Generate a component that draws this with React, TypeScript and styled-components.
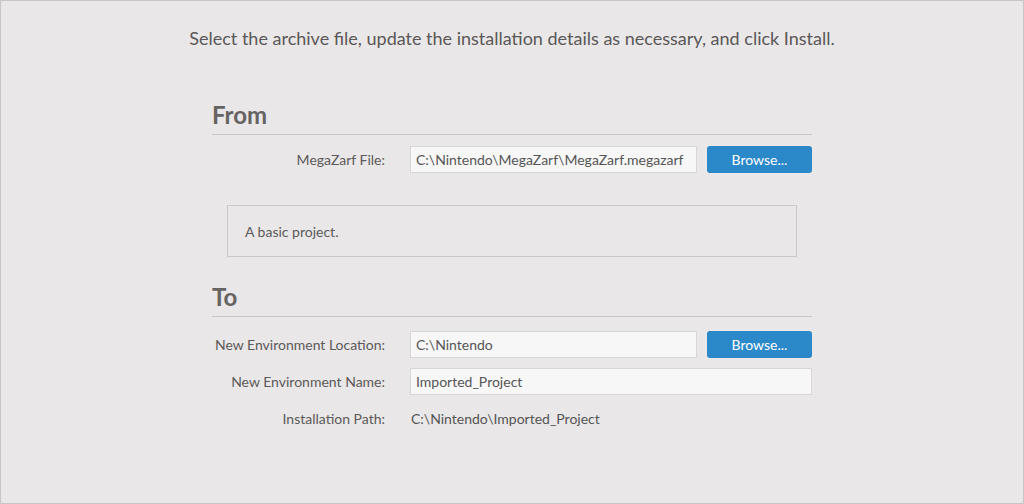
import React from "react";
import styled, { createGlobalStyle } from "styled-components";

const GlobalStyle = createGlobalStyle`
  html, body {
    margin: 0;
    padding: 0;
    background: #e9e7e7;
  }
  body {
    font-family: Lato, "Open Sans", sans-serif;
    color: #555;
  }
`;

const Window = styled.div`
  box-sizing: border-box;
  width: 1024px;
  height: 504px;
  border: 1px solid #c8c6c6;
  background: #e9e7e7;
  display: flex;
  flex-direction: column;
  align-items: center;
`;

const Intro = styled.p`
  margin: 26px 0 0;
  font-size: 18px;
  line-height: 22px;
  color: #5a5858;
`;

const Form = styled.div`
  width: 600px;
  margin-top: 51px;
  display: flex;
  flex-direction: column;
`;

const Heading = styled.h2`
  margin: 0;
  padding: 0 0 4px;
  font-size: 24px;
  line-height: 30px;
  font-weight: 700;
  color: #666363;
  border-bottom: 1px solid #c9c7c7;
`;

const Row = styled.div<{ $top?: number }>`
  display: grid;
  grid-template-columns: 173px 287px 105px;
  column-gap: 25px;
  align-items: center;
  margin-top: ${(p) => p.$top ?? 10}px;
  & > :nth-child(3) {
    margin-left: -15px;
    width: 105px;
  }
`;

const Label = styled.div`
  text-align: right;
  font-size: 14px;
  color: #5c5a5a;
`;

const Field = styled.div<{ $wide?: boolean }>`
  box-sizing: border-box;
  height: 27px;
  padding: 0 5px;
  display: flex;
  align-items: center;
  background: #f7f7f7;
  border: 1px solid #d8d6d6;
  font-size: 14px;
  color: #555;
  ${(p) => (p.$wide ? "grid-column: 2 / span 2; width: 402px;" : "")}
`;

const Value = styled.div`
  padding-left: 1px;
  font-size: 14px;
  color: #555;
  grid-column: 2 / span 2;
`;

const Button = styled.button`
  box-sizing: border-box;
  height: 27px;
  border: none;
  border-radius: 3px;
  background: #2b88c9;
  color: #fff;
  font-family: Lato, sans-serif;
  font-size: 14px;
  cursor: pointer;
`;

const Description = styled.div`
  box-sizing: border-box;
  margin: 32px 15px 0;
  height: 52px;
  padding: 0 17px;
  display: flex;
  align-items: center;
  border: 1px solid #c9c7c7;
  font-size: 14px;
  color: #5c5a5a;
`;

const Spacer = styled.div`
  height: 25px;
`;

export default function App() {
  return (
    <>
      <GlobalStyle />
      <Window>
        <Intro>
          Select the archive file, update the installation details as necessary, and click Install.
        </Intro>
        <Form>
          <Heading>From</Heading>
          <Row $top={11}>
            <Label>MegaZarf File:</Label>
            <Field>C:\Nintendo\MegaZarf\MegaZarf.megazarf</Field>
            <Button>Browse...</Button>
          </Row>
          <Description>A basic project.</Description>
          <Spacer />
          <Heading>To</Heading>
          <Row $top={14}>
            <Label>New Environment Location:</Label>
            <Field>C:\Nintendo</Field>
            <Button>Browse...</Button>
          </Row>
          <Row $top={10}>
            <Label>New Environment Name:</Label>
            <Field $wide>Imported_Project</Field>
          </Row>
          <Row $top={15}>
            <Label>Installation Path:</Label>
            <Value>C:\Nintendo\Imported_Project</Value>
          </Row>
        </Form>
      </Window>
    </>
  );
}
